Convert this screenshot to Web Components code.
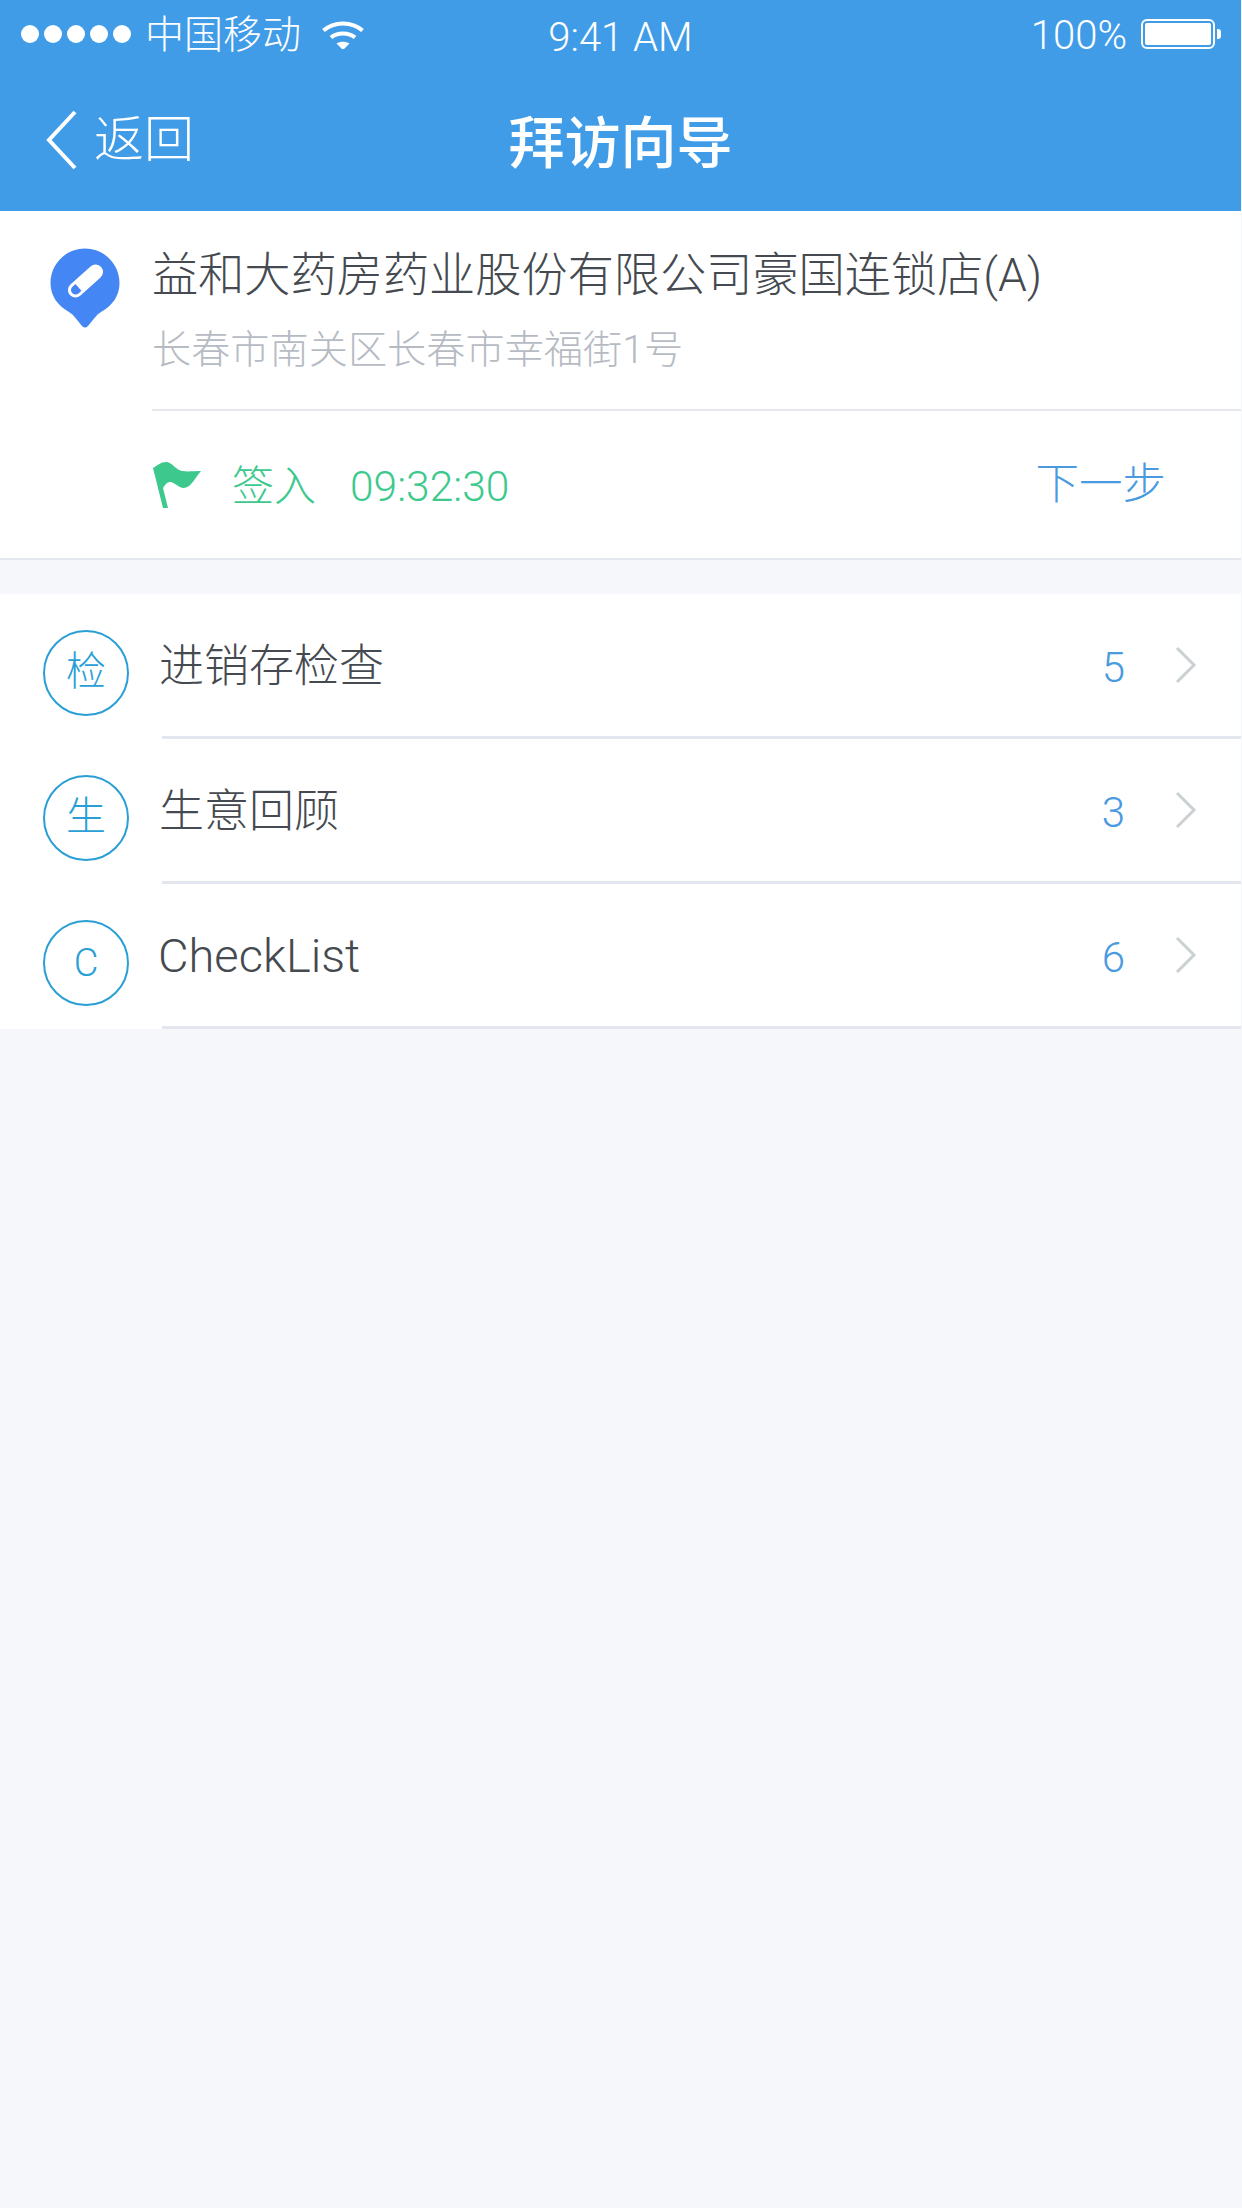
<!DOCTYPE html>
<html lang="zh-CN">
<head>
<meta charset="utf-8">
<title>拜访向导</title>
<style>
  html, body { margin: 0; padding: 0; background: #f5f7fb; }
  body {
    width: 1242px;
    height: 2208px;
    overflow: hidden;
    font-family: Roboto, "Noto Sans CJK SC", sans-serif;
    font-weight: 300;
  }
</style>
</head>
<body>
<app-header back="返回" title="拜访向导"></app-header>
<store-card name="益和大药房药业股份有限公司豪国连锁店(A)" address="长春市南关区长春市幸福街1号" status="签入" time="09:32:30" action="下一步"></store-card>
<wizard-list>
  <wizard-row badge="检" count="5" cjk>进销存检查</wizard-row>
  <wizard-row badge="生" count="3" cjk>生意回顾</wizard-row>
  <wizard-row badge="C" count="6">CheckList</wizard-row>
</wizard-list>

<script>
class StatusBar extends HTMLElement {
  constructor() {
    super();
    this.attachShadow({ mode: 'open' });
    this.shadowRoot.innerHTML = `
      <style>
        :host {
          display: grid;
          grid-template-columns: 1fr auto 1fr;
          align-items: center;
          height: 68px;
          color: #fff;
          font-size: 40px;
        }
        .left, .right { display: flex; align-items: center; }
        .left { padding-left: 21px; }
        .dots { display: flex; gap: 5px; margin-right: 14px; }
        .dots i { width: 18px; height: 18px; border-radius: 50%; background: #fff; }
        .carrier { font-size: 39px; margin-right: 20px; line-height: 48px; position: relative; top: 1px; }
        .time { position: relative; top: 3px; }
        .right { justify-content: flex-end; padding-right: 20px; }
        .pct { margin-right: 14px; position: relative; top: 1px; }
        svg { display: block; }
      </style>
      <div class="left">
        <div class="dots"><i></i><i></i><i></i><i></i><i></i></div>
        <span class="carrier">中国移动</span>
        <svg width="44" height="30" viewBox="0 0 44 30">
          <path d="M2.500 11.500C13 2 31 2 41.500 11.500" fill="none" stroke="#fff" stroke-width="4"/>
          <path d="M10 18.500C16 13 28 13 34 18.500" fill="none" stroke="#fff" stroke-width="4"/>
          <path d="M15.500 24.500C19 22 25 22 28.500 24.500L22 31Z" fill="#fff"/>
        </svg>
      </div>
      <div class="time">9:41 AM</div>
      <div class="right">
        <span class="pct">100%</span>
        <svg width="80" height="30" viewBox="0 0 80 30">
          <rect x="1" y="1" width="72" height="28" rx="5" fill="none" stroke="#fff" stroke-width="2"/>
          <rect x="4" y="4" width="66" height="22" rx="2" fill="#fff"/>
          <path d="M76 10h1a3 3 0 0 1 3 3v4a3 3 0 0 1-3 3h-1Z" fill="#fff"/>
        </svg>
      </div>
    `;
  }
}
customElements.define('status-bar', StatusBar);

class AppHeader extends HTMLElement {
  constructor() {
    super();
    this.attachShadow({ mode: 'open' });
  }

  connectedCallback() {
    const back = this.getAttribute('back') || '';
    const title = this.getAttribute('title') || '';
    this.shadowRoot.innerHTML = `
      <style>
        :host {
          display: block;
          background: #419ce8;
          color: #fff;
          margin-right: 1px;
        }
        .nav {
          display: grid;
          grid-template-columns: 1fr auto 1fr;
          align-items: center;
          height: 143px;
        }
        .back {
          display: flex;
          align-items: center;
          gap: 17px;
          padding-left: 46px;
          font-size: 50px;
          line-height: 60px;
        }
        .title { font-size: 56px; font-weight: 500; line-height: 70px; position: relative; top: 4px; }
        svg { display: block; }
      </style>
      <status-bar></status-bar>
      <div class="nav">
        <div class="back">
          <svg width="31" height="60" viewBox="0 0 31 60">
            <path d="M29 2L3 30L29 58" fill="none" stroke="#fff" stroke-width="4"/>
          </svg>
          <span>${back}</span>
        </div>
        <div class="title">${title}</div>
        <div></div>
      </div>
    `;
  }
}
customElements.define('app-header', AppHeader);

class StoreCard extends HTMLElement {
  constructor() {
    super();
    this.attachShadow({ mode: 'open' });
  }

  connectedCallback() {
    const attr = name => this.getAttribute(name) || '';
    this.shadowRoot.innerHTML = `
      <style>
        :host {
          display: flex;
          background: #fff;
          margin-right: 1px;
          border-bottom: 2px solid #e5e8ee;
        }
        .icon { width: 152px; padding: 37px 0 0 50px; box-sizing: border-box; flex: none; }
        .main { flex: 1; padding-top: 34px; }
        .name { font-size: 46.200px; line-height: 60px; color: #454a50; white-space: nowrap; }
        .address { font-size: 39.200px; line-height: 50px; margin-top: 20px; color: #b6bbc3; white-space: nowrap; }
        .visit {
          display: flex;
          align-items: center;
          height: 147px;
          margin-top: 34px;
          border-top: 2px solid #e6e8ee;
          box-sizing: content-box;
        }
        .status { font-size: 42px; color: #3dc98e; margin-left: 30px; position: relative; top: -2px; }
        .time { font-size: 42.500px; color: #3dc98e; margin-left: 34px; position: relative; top: 2px; }
        .action { font-size: 43.500px; color: #4a9adf; margin-left: auto; margin-right: 75px; position: relative; top: -4px; }
        svg { display: block; }
      </style>
      <div class="icon">
        <svg width="70" height="80" viewBox="0 0 70 80">
          <path d="M35 .5C54 .5 69.500 16 69.500 35C69.500 48 62 58 51 64C46 67 43 72 38 78C36 80 34 80 32 78C27 72 24 67 19 64C8 58 .5 48 .5 35C.5 16 16 .5 35 .5Z" fill="#4486f3"/>
          <g transform="rotate(-42 35.500 33)">
            <rect x="14.500" y="25.500" width="42" height="15" rx="7.500" fill="#fff"/>
            <path d="M26 28.500H22a4.500 4.500 0 0 0 0 9h4Z" fill="#4486f3"/>
          </g>
        </svg>
      </div>
      <div class="main">
        <div class="name">${attr('name')}</div>
        <div class="address">${attr('address')}</div>
        <div class="visit">
          <svg width="50" height="48" viewBox="0 0 50 48">
            <path d="M1 7C6 4 9 1 14 1C20 1 24 9 30 10C36 11 42 10 49 10C44 15 40 26 32 27C26 27 23 21 18 21C15 21 13 24 11 27L16 47L11 47Z" fill="#3dc98e"/>
          </svg>
          <span class="status">${attr('status')}</span>
          <span class="time">${attr('time')}</span>
          <span class="action">${attr('action')}</span>
        </div>
      </div>
    `;
  }
}
customElements.define('store-card', StoreCard);

class WizardList extends HTMLElement {
  constructor() {
    super();
    this.attachShadow({ mode: 'open' });
    this.shadowRoot.innerHTML = `
      <style>
        :host {
          display: block;
          margin-top: 34px;
          margin-right: 1px;
          background: #fff;
        }
      </style>
      <slot></slot>
    `;
  }
}
customElements.define('wizard-list', WizardList);

class WizardRow extends HTMLElement {
  constructor() {
    super();
    this.attachShadow({ mode: 'open' });
  }

  connectedCallback() {
    const badge = this.getAttribute('badge') || '';
    const count = this.getAttribute('count') || '';
    this.shadowRoot.innerHTML = `
      <style>
        :host {
          display: flex;
          align-items: flex-start;
          height: 145px;
          box-sizing: border-box;
          padding-left: 43px;
        }
        .badge {
          flex: none;
          width: 86px;
          height: 86px;
          margin-top: 36px;
          box-sizing: border-box;
          border: 2.500px solid #2a9fd6;
          border-radius: 50%;
          display: flex;
          align-items: center;
          justify-content: center;
          color: #2a9fd6;
          font-size: 38px;
        }
        .badge span { position: relative; }
        :host([cjk]) .badge span { font-size: 40px; top: -5px; }
        .body {
          flex: 1;
          align-self: stretch;
          margin-left: 33px;
          display: flex;
          align-items: center;
          border-bottom: 3px solid #e3e6ee;
          box-sizing: border-box;
        }
        .label {
          font-size: 47px;
          line-height: 60px;
          color: #454a50;
          margin-left: -4px;
          position: relative;
          top: 1px;
        }
        :host([cjk]) .label { font-size: 45px; margin-left: -3px; top: 2px; }
        .count {
          margin-left: auto;
          font-size: 42px;
          color: #4a9adf;
          position: relative;
          top: 2px;
        }
        svg { display: block; margin: 0 44px 0 50px; position: relative; top: 0; }
      </style>
      <div class="badge"><span>${badge}</span></div>
      <div class="body">
        <div class="label"><slot></slot></div>
        <div class="count">${count}</div>
        <svg width="22" height="38" viewBox="0 0 22 38">
          <path d="M2 2L19 19L2 36" fill="none" stroke="#cbd0d3" stroke-width="3"/>
        </svg>
      </div>
    `;
  }
}
customElements.define('wizard-row', WizardRow);
</script>
</body>
</html>
